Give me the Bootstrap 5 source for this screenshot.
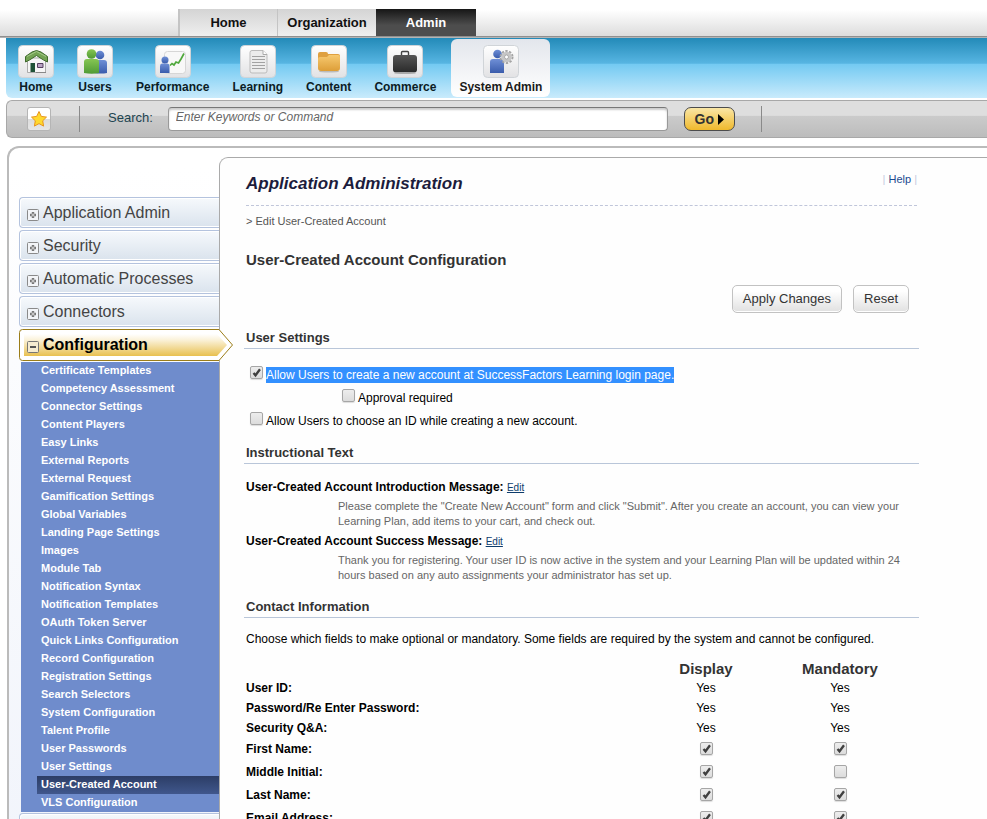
<!DOCTYPE html>
<html lang="en">
<head>
<meta charset="utf-8">
<meta name="viewport" content="width=device-width, initial-scale=1">
<title>Application Administration</title>
<link href="https://cdn.jsdelivr.net/npm/bootstrap@5.3.0/dist/css/bootstrap.min.css" rel="stylesheet">
<style>
body{font-family:"Liberation Sans",Arial,sans-serif;font-size:12px;line-height:18px;color:#000;background:#fff}
h1,h2,h3,p{margin:0}
a{text-decoration:none}
.site-top{height:38px;padding:0 0 1px 178px;background:linear-gradient(#fff 10px,#dcdcdc 36px);border-bottom:1px solid #b4b4b4;box-shadow:inset 0 -1px #8f8f8f}
.top-tab{width:99px;height:27px;font-size:13px;font-weight:700;color:#111;background:linear-gradient(#d4d4d4,#efefef);border-left:1px solid #c4c4c4}
.top-tab:first-child{border-left-width:2px}
.top-tab.is-on{width:100px;color:#fff;border:0;background:linear-gradient(#161616,#4d4d4d 60%)}
.ribbon{margin-left:6px;height:60px;padding:1px 4px 0;gap:7px;background:linear-gradient(#238ab8,#57b5e2 42%,#74caf2 44%,#c9ebfc);border-bottom-left-radius:6px}
.ribbon-item{height:58px;padding:6px 8px 0;font-weight:700;line-height:18px;color:#0c1c26;border-radius:6px}
.ribbon-item.is-on{color:#1a1a1a;background:linear-gradient(#e3e6ec,#fff)}
.tile{display:block;width:36px;height:33px}
.search-bar{margin:2px 0 0 6px;height:38px;padding-left:20px;border:1px solid #a8a8a8;border-right:0;border-radius:6px 0 0 6px;background:linear-gradient(#dedede 40%,#cbcbcb 42%,#bcbcbc)}
.fav{width:24px;height:24px;margin-right:28px;border:1px solid #b5b5b5;border-radius:3px;background:linear-gradient(#fff 48%,#dcdcdc 52%,#e6e6e6)}
.rule{width:1px;height:26px;background:#8a8a8a}
.search-bar label{font-size:13px;color:#1c4450;margin:0 15px 2px 28px}
.search-box{width:500px;height:24px;padding:0 7px 4px;font-size:12px;border:1px solid #999;border-top-color:#777;border-radius:4px;box-shadow:inset 0 2px 2px #ccc;background:#fff}
.search-box::placeholder{font-style:italic;color:#666;opacity:1}
.go{width:51px;height:24px;margin:0 26px 0 16px;padding:0;font-size:14px;font-weight:700;color:#333;border:1px solid #4c4c4c;border-radius:7px;background:linear-gradient(#f9e6a6,#f0b92c)}
.shell{margin:8px 0 0 7px;border:2px solid #bbb;border-right:0;border-bottom:0;border-radius:12px 0 0 0;padding:9px 0 0 10px;background:linear-gradient(#fff 20px,#edf1fa)}
.side{width:200px;padding-top:40px;z-index:2}
.side-head{display:block;width:100%;height:31px;margin-bottom:2px;padding:1px 0 0 7px;font-size:16px;line-height:18px;color:#444;text-align:left;border:1px solid #b4c3de;border-right:0;border-radius:4px 0 0 4px;background:linear-gradient(#f6f9fc,#dae3ed);box-shadow:inset 1px 1px #fff,inset 0 -1px #fff}
.side-head svg{margin:2px 4px 0 0}
.side-head.is-on{width:214px;height:33px;margin-bottom:0;padding:0 0 1px 8px;font-weight:700;color:#000;border:0;border-radius:0;box-shadow:none;background:url("data:image/svg+xml,%3Csvg xmlns='http://www.w3.org/2000/svg' width='214' height='33'%3E%3Cdefs%3E%3ClinearGradient id='g' x2='0' y2='1'%3E%3Cstop stop-color='%23fff'/%3E%3Cstop offset='.25' stop-color='%23fbf3dc'/%3E%3Cstop offset='1' stop-color='%23e8c050'/%3E%3C/linearGradient%3E%3C/defs%3E%3Cpath d='M3.500 .5H200L213.500 16 200 31.500H3.500Q.5 31.500 .5 28.500V3.500Q.5 .5 3.500 .5Z' fill='%23fff' stroke='%239b7d18'/%3E%3Cpath d='M5 5H198L208 16 198 27H5Z' fill='url(%23g)'/%3E%3C/svg%3E") no-repeat}
.side-list{margin:0 0 1px 2px;padding:0 0 0 16px;background:#6f8ccc;list-style:none}
.side-list a{display:block;padding:0 0 2px 4px;font-size:11px;font-weight:700;line-height:16px;height:18px;color:#fff;white-space:nowrap}
.side-list a.is-on{background:linear-gradient(#2c3d66,#40578c)}
.pane{min-height:900px;padding:15px 68px 0 24px;background:#fefefe;border:1px solid #aaa;border-right:0;border-bottom:0;border-radius:9px 0 0 0}
.pane-inner{padding:0 2px}
.pane-title{padding-bottom:10px;border-bottom:1px dashed #c0c6da}
.pane-title h1{font-size:17px;line-height:22px;font-weight:700;font-style:italic;color:#1c1c3c}
.help{font-size:11px;line-height:13px;color:#c5cbe0}
.help a{color:#1c4a90}
.crumb{margin-top:8px;font-size:11px;line-height:15px;color:#555}
.page-name{margin-top:21px;font-size:15px;line-height:20px;font-weight:700;color:#333}
.actions{gap:11px;margin:15px 0 14px;padding-right:8px}
.tool-btn{height:28px;padding:0 10px;font-size:13px;color:#333;border:1px solid #c2c2c2;border-radius:5px;background:linear-gradient(#fff 20%,#e0e0e0);box-shadow:inset 0 -1px #fff}
.part{padding:0 2px;font-size:13px;line-height:21px;font-weight:700;color:#333;border-bottom:1px solid #b9c6d9}
.opts{padding:14px 0 10px}
.opt{height:23px;padding-left:6px}
.opt-sub{padding-left:98px}
.tick{appearance:none;flex:none;width:13px;height:13px;margin:0 3px 4px 0;border:1px solid #a6a6a6;border-radius:2px;background:linear-gradient(#ededed,#dcdcdc);box-shadow:0 1px 1px #ddd}
.tick:checked{background:url("data:image/svg+xml,%3Csvg xmlns='http://www.w3.org/2000/svg' width='11' height='11'%3E%3Cpath d='M2.500 6L4.500 8.300 9 2.300' fill='none' stroke='%23404040' stroke-width='2.300'/%3E%3C/svg%3E"),linear-gradient(#ededed,#dcdcdc)}
.picked{padding:1px 0;color:#fff;background:#3390ff}
.msgs{padding-top:14px;padding-bottom:10px}
.msg-head{font-weight:700}
.msg-head a{font-size:10px;font-weight:400;color:#0d3c6c;text-decoration:underline}
.msg-body{margin:2px 0 3px;padding-left:92px;font-size:11px;line-height:15px;color:#666}
.contact{padding-top:12px;padding-right:12px}
.fields{width:100%;margin-top:12px}
.fields th,.fields td{padding:0;height:20px;line-height:18px}
.fields thead th,.fields thead td{height:18px;font-size:15px;color:#333}
.fields .tall th,.fields .tall td{height:23px;padding-bottom:2px}
.fields .tick{display:block;margin:0 auto}
.fields .num{width:134px;text-align:center}
</style>
<script src="https://cdn.jsdelivr.net/npm/bootstrap@5.3.0/dist/js/bootstrap.bundle.min.js"></script>
</head>
<body class="vh-100 overflow-hidden">
<svg width="0" height="0" class="position-absolute" aria-hidden="true">
  <defs>
    <linearGradient id="tileBg" x2="0" y2="1"><stop stop-color="#fff"/><stop offset="1" stop-color="#e2e2e4"/></linearGradient>
    <linearGradient id="green" x2="0" y2="1"><stop stop-color="#86c653"/><stop offset="1" stop-color="#4f9a35"/></linearGradient>
    <linearGradient id="blue" x2="0" y2="1"><stop stop-color="#6f8fd6"/><stop offset="1" stop-color="#3a5cac"/></linearGradient>
    <linearGradient id="gold" x2="0" y2="1"><stop stop-color="#f7c970"/><stop offset="1" stop-color="#dd9e38"/></linearGradient>
    <linearGradient id="dark" x2="0" y2="1"><stop stop-color="#555"/><stop offset="1" stop-color="#2a2a2a"/></linearGradient>
    <g id="tile"><rect x=".5" y=".5" width="35" height="32" rx="4" fill="url(#tileBg)" stroke="#d0d4d8"/></g>
    <g id="plus"><rect x=".5" y=".5" width="11" height="11" rx="1" fill="#f3f5f8" stroke="#8a8a8a"/><path d="M6 3v6M3 6h6" stroke="#777" stroke-width="2.400"/><path d="M6 4.500v3M4.500 6h3" stroke="#ddd"/></g>
  </defs>
</svg>

<header class="site-top d-flex align-items-end">
  <nav class="d-flex" aria-label="Areas">
    <a class="top-tab d-flex align-items-center justify-content-center" href="#">Home</a>
    <a class="top-tab d-flex align-items-center justify-content-center" href="#">Organization</a>
    <a class="top-tab is-on d-flex align-items-center justify-content-center" href="#">Admin</a>
  </nav>
</header>

<nav class="ribbon d-flex" aria-label="Sections">
  <a class="ribbon-item d-flex flex-column align-items-center" href="#">
    <svg class="tile" viewBox="0 0 36 33"><use href="#tile"/><path d="M9.500 13h18v14.500h-18z" fill="#f6f6f6" stroke="#999" stroke-width=".8"/><path d="M7.500 11.500L14 7l4.500-1.500L23 7l6.500 4.500v5.500l-4-2-7-4.500-7 4.500-4 2z" fill="#73a354" stroke="#3f6b2d"/><path d="M9 11.500L18.500 6.500l9.500 5" fill="none" stroke="#a4c98a"/><path d="M12.500 18h4.500v9h-4.500z" fill="#1f5237"/><path d="M19.500 18.500h5.500v4h-5.500z" fill="#b9a4c4" stroke="#554060"/><path d="M18 27.500h10" stroke="#888"/></svg>Home</a>
  <a class="ribbon-item d-flex flex-column align-items-center" href="#">
    <svg class="tile" viewBox="0 0 36 33"><use href="#tile"/><circle cx="23" cy="10" r="4.300" fill="url(#blue)"/><path d="M17 28V18q0-3 3-3h7q3 0 3 3v10q-6 1-13 0z" fill="url(#blue)"/><circle cx="14.500" cy="9" r="4.800" fill="url(#green)"/><path d="M7 28V17q0-3 3-3h9q3 0 3 3v11q-7 1.500-15 0z" fill="url(#green)"/></svg>Users</a>
  <a class="ribbon-item d-flex flex-column align-items-center" href="#">
    <svg class="tile" viewBox="0 0 36 33"><use href="#tile"/><rect x="9.500" y="6.500" width="21" height="22" rx="3" fill="#f8f8f8" stroke="#d6d6d6"/><circle cx="10" cy="15" r="3.500" fill="url(#blue)"/><path d="M5 28v-7q0-2.500 2-2.500h5.500q2 0 2 2.500v7z" fill="url(#blue)"/><path d="M15 20.500l2-2 2 1.500 2-3 2.500 1 2.500-4 3-5.500" fill="none" stroke="#4fa83c" stroke-width="1.700"/></svg>Performance</a>
  <a class="ribbon-item d-flex flex-column align-items-center" href="#">
    <svg class="tile" viewBox="0 0 36 33"><use href="#tile"/><path d="M12 5.500h11l4 4V26q0 2-2 2H12q-2 0-2-2V7.500q0-2 2-2z" fill="#ececec" stroke="#bbb"/><path d="M23 5.500v4h4" fill="#fff" stroke="#aaa"/><path d="M12 11.500h13M12 14.500h13M12 17.500h13M12 20.500h13M12 23.500h13" stroke="#a2a2a2"/></svg>Learning</a>
  <a class="ribbon-item d-flex flex-column align-items-center" href="#">
    <svg class="tile" viewBox="0 0 36 33"><use href="#tile"/><ellipse cx="18" cy="26.500" rx="10" ry="1" fill="#bbb"/><path d="M7 9q0-2 2-2h6q2 0 2 2h10q2 0 2 2v8H7z" fill="#dfa040"/><path d="M7 14q0-2 2-2h7l2-2h9q2 0 2 2v11q0 3-3 3H10q-3 0-3-3z" fill="url(#gold)"/></svg>Content</a>
  <a class="ribbon-item d-flex flex-column align-items-center" href="#">
    <svg class="tile" viewBox="0 0 36 33"><use href="#tile"/><path d="M14.500 11V7.500q0-1 1-1h5q1 0 1 1V11" fill="none" stroke="#444" stroke-width="1.400"/><rect x="6" y="10" width="24" height="17.500" rx="3" fill="url(#dark)"/><ellipse cx="18" cy="28" rx="11" ry="1" fill="#aaa"/></svg>Commerce</a>
  <a class="ribbon-item is-on d-flex flex-column align-items-center" href="#">
    <svg class="tile" viewBox="0 0 36 33"><use href="#tile"/><circle cx="14.500" cy="9" r="4.300" fill="url(#blue)"/><path d="M7 28V17q0-3 3-3h8q3 0 3 3v11z" fill="url(#blue)"/><circle cx="23.500" cy="12" r="6" fill="none" stroke="#a4a4a4" stroke-width="2" stroke-dasharray="2.300 1.470"/><circle cx="23.500" cy="12" r="3.700" fill="#f8f8f8" stroke="#c6c6c6" stroke-width="3.200"/><circle cx="23.500" cy="12" r="2" fill="#fff" stroke="#999" stroke-width=".8"/></svg>System Admin</a>
</nav>

<form class="search-bar d-flex align-items-center">
  <button type="button" class="fav p-0 d-flex align-items-center justify-content-center" aria-label="Favorites"><svg width="18" height="18" viewBox="0 0 18 18"><path d="M9 1.500l2.300 4.900 5.200.7-3.800 3.700.9 5.300L9 13.600l-4.600 2.500.9-5.300L1.500 7.100l5.200-.7z" fill="#ffd92e" stroke="#e8951c"/></svg></button>
  <span class="rule"></span>
  <label for="q">Search:</label>
  <input id="q" class="search-box" type="text" placeholder="Enter Keywords or Command">
  <button type="button" class="go d-flex align-items-center justify-content-center">Go<svg class="ms-1" width="6" height="11" viewBox="0 0 6 11"><path d="M0 0l6 5.500L0 11z"/></svg></button>
  <span class="rule"></span>
</form>

<main class="shell d-flex">
  <nav class="side flex-shrink-0" aria-label="Administration menu">
    <button type="button" class="side-head"><svg width="12" height="12"><use href="#plus"/></svg>Application Admin</button>
    <button type="button" class="side-head"><svg width="12" height="12"><use href="#plus"/></svg>Security</button>
    <button type="button" class="side-head"><svg width="12" height="12"><use href="#plus"/></svg>Automatic Processes</button>
    <button type="button" class="side-head"><svg width="12" height="12"><use href="#plus"/></svg>Connectors</button>
    <button type="button" class="side-head is-on"><svg width="12" height="12"><rect x=".5" y=".5" width="11" height="11" rx="1" fill="#f6ecd0" stroke="#777"/><path d="M3 6h6" stroke="#555" stroke-width="2"/></svg>Configuration</button>
    <ul class="side-list">
      <li><a href="#">Certificate Templates</a></li>
      <li><a href="#">Competency Assessment</a></li>
      <li><a href="#">Connector Settings</a></li>
      <li><a href="#">Content Players</a></li>
      <li><a href="#">Easy Links</a></li>
      <li><a href="#">External Reports</a></li>
      <li><a href="#">External Request</a></li>
      <li><a href="#">Gamification Settings</a></li>
      <li><a href="#">Global Variables</a></li>
      <li><a href="#">Landing Page Settings</a></li>
      <li><a href="#">Images</a></li>
      <li><a href="#">Module Tab</a></li>
      <li><a href="#">Notification Syntax</a></li>
      <li><a href="#">Notification Templates</a></li>
      <li><a href="#">OAuth Token Server</a></li>
      <li><a href="#">Quick Links Configuration</a></li>
      <li><a href="#">Record Configuration</a></li>
      <li><a href="#">Registration Settings</a></li>
      <li><a href="#">Search Selectors</a></li>
      <li><a href="#">System Configuration</a></li>
      <li><a href="#">Talent Profile</a></li>
      <li><a href="#">User Passwords</a></li>
      <li><a href="#">User Settings</a></li>
      <li><a class="is-on" href="#" aria-current="page">User-Created Account</a></li>
      <li><a href="#">VLS Configuration</a></li>
    </ul>
    <button type="button" class="side-head" aria-label="Next menu group"></button>
  </nav>

  <section class="pane flex-grow-1">
    <div class="pane-inner">
      <div class="pane-title d-flex justify-content-between align-items-start">
        <h1>Application Administration</h1>
        <div class="help">| <a href="#">Help</a> |</div>
      </div>
      <p class="crumb">&gt; Edit User-Created Account</p>
      <h2 class="page-name">User-Created Account Configuration</h2>
      <div class="actions d-flex justify-content-end">
        <button type="button" class="tool-btn">Apply Changes</button>
        <button type="button" class="tool-btn">Reset</button>
      </div>
    </div>

    <h3 class="part">User Settings</h3>
    <div class="opts">
      <div class="opt d-flex align-items-center"><input class="tick" type="checkbox" id="allow" checked><label for="allow"><span class="picked">Allow Users to create a new account at SuccessFactors Learning login page.</span></label></div>
      <div class="opt opt-sub d-flex align-items-center"><input class="tick" type="checkbox" id="approve"><label for="approve">Approval required</label></div>
      <div class="opt d-flex align-items-center"><input class="tick" type="checkbox" id="choose"><label for="choose">Allow Users to choose an ID while creating a new account.</label></div>
    </div>

    <h3 class="part">Instructional Text</h3>
    <div class="pane-inner msgs">
      <p class="msg-head">User-Created Account Introduction Message: <a href="#">Edit</a></p>
      <p class="msg-body">Please complete the "Create New Account" form and click "Submit". After you create an account, you can view your Learning Plan, add items to your cart, and check out.</p>
      <p class="msg-head">User-Created Account Success Message: <a href="#">Edit</a></p>
      <p class="msg-body">Thank you for registering. Your user ID is now active in the system and your Learning Plan will be updated within 24 hours based on any auto assignments your administrator has set up.</p>
    </div>

    <h3 class="part">Contact Information</h3>
    <div class="pane-inner contact">
      <p>Choose which fields to make optional or mandatory. Some fields are required by the system and cannot be configured.</p>
      <table class="fields">
        <thead><tr><td></td><th class="num" scope="col">Display</th><th class="num" scope="col">Mandatory</th></tr></thead>
        <tbody>
          <tr><th scope="row">User ID:</th><td class="num">Yes</td><td class="num">Yes</td></tr>
          <tr><th scope="row">Password/Re Enter Password:</th><td class="num">Yes</td><td class="num">Yes</td></tr>
          <tr><th scope="row">Security Q&amp;A:</th><td class="num">Yes</td><td class="num">Yes</td></tr>
          <tr class="tall"><th scope="row">First Name:</th><td class="num"><input class="tick" type="checkbox" aria-label="Display First Name" checked></td><td class="num"><input class="tick" type="checkbox" aria-label="First Name mandatory" checked></td></tr>
          <tr class="tall"><th scope="row">Middle Initial:</th><td class="num"><input class="tick" type="checkbox" aria-label="Display Middle Initial" checked></td><td class="num"><input class="tick" type="checkbox" aria-label="Middle Initial mandatory"></td></tr>
          <tr class="tall"><th scope="row">Last Name:</th><td class="num"><input class="tick" type="checkbox" aria-label="Display Last Name" checked></td><td class="num"><input class="tick" type="checkbox" aria-label="Last Name mandatory" checked></td></tr>
          <tr class="tall"><th scope="row">Email Address:</th><td class="num"><input class="tick" type="checkbox" aria-label="Display Email Address" checked></td><td class="num"><input class="tick" type="checkbox" aria-label="Email Address mandatory" checked></td></tr>
        </tbody>
      </table>
    </div>
  </section>
</main>
</body>
</html>
